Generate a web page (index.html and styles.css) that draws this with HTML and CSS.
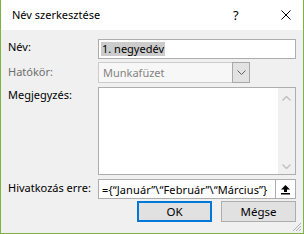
FILE: index.html
```html
<!DOCTYPE html>
<html lang="hu">
<head>
    <meta charset="UTF-8">
    <title>Név szerkesztése</title>
    <link rel="stylesheet" href="styles.css">
</head>
<body>
    <div class="dialog">
        <div class="titlebar">
            <span class="title">Név szerkesztése</span>
            <span class="help">?</span>
            <svg class="close" width="10" height="10" viewBox="0 0 10 10">
                <path d="M0.5 0.5 L9.5 9.5 M9.5 0.5 L0.5 9.5" stroke="#000" stroke-width="1" fill="none"/>
            </svg>
        </div>
        <div class="content">
            <div class="row row-name">
                <label class="label">Név:</label>
                <div class="textbox"><span class="selected">1. negyedév</span></div>
            </div>
            <div class="row row-scope">
                <label class="label disabled">Hatókör:</label>
                <div class="combo">
                    <span class="combo-text">Munkafüzet</span>
                    <span class="drop">
                        <svg width="9" height="5" viewBox="0 0 9 5">
                            <path d="M0.5 0.5 L4.5 4.5 L8.5 0.5" stroke="#606060" fill="none"/>
                        </svg>
                    </span>
                </div>
            </div>
            <div class="row row-comment">
                <label class="label">Megjegyzés:</label>
                <div class="memo">
                    <div class="scrollbar">
                        <svg width="9" height="5" viewBox="0 0 9 5">
                            <path d="M0.5 4.5 L4.5 0.5 L8.5 4.5" stroke="#c0c0c0" stroke-width="1.4" fill="none"/>
                        </svg>
                        <svg width="9" height="5" viewBox="0 0 9 5">
                            <path d="M0.5 0.5 L4.5 4.5 L8.5 0.5" stroke="#c0c0c0" stroke-width="1.4" fill="none"/>
                        </svg>
                    </div>
                </div>
            </div>
            <div class="row row-ref">
                <label class="label">Hivatkozás erre:</label>
                <div class="refbox">
                    <span class="ref-text">={“Január”\“Február”\“Március”}</span>
                    <span class="pick">
                        <svg width="11" height="11" viewBox="0 0 11 11">
                            <path d="M5.5 1 L10 5.5 L7 5.5 L7 8 L4 8 L4 5.5 L1 5.5 Z" fill="#000"/>
                            <rect x="1" y="9" width="9" height="1.5" fill="#000"/>
                        </svg>
                    </span>
                </div>
            </div>
            <div class="buttons">
                <button type="button" class="btn btn-default">OK</button>
                <button type="button" class="btn">Mégse</button>
            </div>
        </div>
        <svg class="grip" width="10" height="10" viewBox="0 0 10 10">
            <path d="M9 1 L1 9 M9 4 L4 9 M9 7 L7 9" stroke="#b0b0b0" stroke-width="1" fill="none"/>
        </svg>
    </div>
</body>
</html>
```

FILE: styles.css
```css
body {
    margin: 0;
    font-family: "Noto Sans", "Open Sans", sans-serif;
    font-size: 11px;
    color: #000;
}
.dialog {
    position: relative;
    width: 304px;
    height: 234px;
    box-sizing: border-box;
    border-left: 1px solid #7cb342;
    border-right: 1px solid #7cb342;
    border-bottom: 1px solid #7cb342;
    background: #f0f0f0;
}
.titlebar {
    display: flex;
    align-items: center;
    height: 30px;
    padding-left: 11px;
    background: #fff;
}
.title {
    flex: 1;
    line-height: 30px;
}
.help {
    width: 13px;
    margin-right: 35px;
    font-size: 13px;
}
.close {
    margin-right: 12px;
}
.content {
    padding: 9px 7px 0 7px;
}
.row {
    display: flex;
}
.label {
    width: 90px;
    flex: none;
    line-height: 14px;
    padding-top: 1px;
    white-space: nowrap;
}
.label.disabled {
    color: #6d6d6d;
}
.row-scope {
    margin-top: 3px;
}
.row-scope .label {
    padding-top: 3px;
}
.row-ref .label {
    padding-top: 2px;
}
.row-comment,
.row-ref {
    margin-top: 4px;
}
.textbox {
    flex: 1;
    height: 20px;
    box-sizing: border-box;
    border: 1px solid #adadad;
    background: #fff;
    padding: 2px 2px;
    display: flex;
    align-items: center;
}
.selected {
    background: #cccccc;
    line-height: 14px;
    padding: 0 1px;
}
.combo {
    width: 152px;
    height: 21px;
    box-sizing: border-box;
    border: 1px solid #cccccc;
    background: #f7f7f7;
    display: flex;
    align-items: center;
}
.combo-text {
    flex: 1;
    padding-left: 4px;
    color: #838383;
}
.drop {
    width: 18px;
    height: 21px;
    margin: -1px -1px -1px 0;
    box-sizing: border-box;
    border: 1px solid #a8a8a8;
    background: #e2e2e2;
    display: flex;
    align-items: center;
    justify-content: center;
}
.memo {
    flex: 1;
    height: 88px;
    box-sizing: border-box;
    border: 1px solid #adadad;
    background: #fff;
    display: flex;
    justify-content: flex-end;
}
.scrollbar {
    width: 17px;
    background: #f0f0f0;
    display: flex;
    flex-direction: column;
    justify-content: space-between;
    align-items: center;
    padding: 8px 0 5px;
}
.refbox {
    flex: 1;
    height: 20px;
    box-sizing: border-box;
    border: 1px solid #adadad;
    background: #fff;
    display: flex;
    align-items: center;
    overflow: hidden;
}
.ref-text {
    flex: 1;
    padding-left: 3px;
    white-space: nowrap;
    overflow: hidden;
    letter-spacing: 0.1px;
}
.pick {
    width: 20px;
    height: 18px;
    box-sizing: border-box;
    border-left: 1px solid #adadad;
    background: #fff;
    display: flex;
    align-items: center;
    justify-content: center;
}
.buttons {
    display: flex;
    justify-content: flex-end;
    gap: 9px;
    margin-top: 2px;
}
.btn {
    width: 75px;
    height: 21px;
    box-sizing: border-box;
    border: 1px solid #adadad;
    background: #e1e1e1;
    font-family: inherit;
    font-size: 11.5px;
    color: #000;
    padding: 0;
}
.btn-default {
    border: 2px solid #0078d7;
}
.grip {
    position: absolute;
    right: 1px;
    bottom: 1px;
}
```
